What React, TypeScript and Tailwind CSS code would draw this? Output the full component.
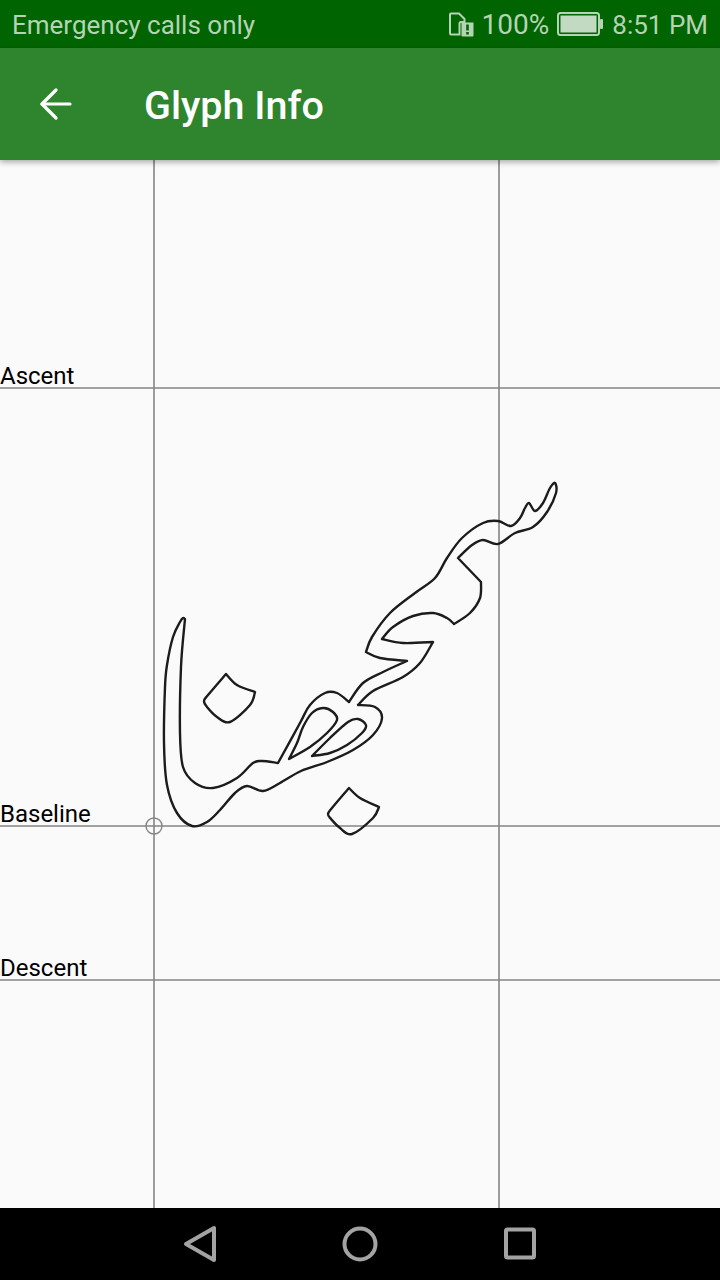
// App.tsx
import { ArrowLeft } from "lucide-react";

type Pt = [number, number];

// catmull-rom through the points, so an outline can be read off the picture
function smooth(pts: Pt[]) {
  let d = "";
  for (let i = 0; i < pts.length - 1; i++) {
    const p0 = pts[i - 1] || pts[i];
    const p1 = pts[i];
    const p2 = pts[i + 1];
    const p3 = pts[i + 2] || p2;
    const c1x = p1[0] + (p2[0] - p0[0]) / 6;
    const c1y = p1[1] + (p2[1] - p0[1]) / 6;
    const c2x = p2[0] - (p3[0] - p1[0]) / 6;
    const c2y = p2[1] - (p3[1] - p1[1]) / 6;
    d += `C${c1x.toFixed(1)} ${c1y.toFixed(1)} ${c2x.toFixed(1)} ${c2y.toFixed(1)} ${p2[0]} ${p2[1]}`;
  }
  return d;
}

// every run starts where the last one ended, joins between runs are corners
function outline(runs: Pt[][]) {
  return `M${runs[0][0][0]} ${runs[0][0][1]}` + runs.map(smooth).join("") + "Z";
}

const mainContour: Pt[][] = [
  [
    [185, 619], [183, 618], [180, 622], [173, 637], [167, 665], [165, 687], [164, 743], [167, 785], [177, 813], [192, 826],
    [207, 822], [220, 810], [235, 793], [247, 786], [263, 791], [280, 783], [301, 771], [327, 762],
    [353, 750], [373, 735], [382, 718], [375, 707], [358, 705],
  ],
  [[358, 705], [373, 691], [403, 677], [420, 663], [433, 642]],
  [[433, 642], [403, 643], [382, 639]],
  [[382, 639], [393, 627], [413, 616], [433, 613], [447, 618], [454, 624]],
  [[454, 624], [470, 613], [480, 598], [481, 582]],
  [[481, 582], [458, 558]],
  [
    [458, 558], [472, 545], [483, 540], [498, 544], [515, 533], [533, 527], [547, 512], [556, 493],
    [555, 483], [550, 488], [543, 503], [535, 511], [529, 503], [525, 508], [520, 518], [511, 526],
    [498, 521], [483, 523], [462, 538], [447, 558], [435, 578], [415, 593], [390, 613], [372, 637],
    [366, 652],
  ],
  [[366, 652], [380, 658], [407, 661]],
  [[407, 661], [383, 672], [363, 683], [349, 702]],
  [[349, 702], [337, 693], [325, 693], [310, 705], [300, 723], [278, 763]],
  [
    [278, 763], [262, 761], [253, 763], [237, 778], [213, 788], [195, 783], [183, 767], [180, 733],
    [181, 667], [185, 619],
  ],
];

const counterLeft: Pt[][] = [
  [
    [289, 759], [297, 743], [303, 727], [312, 713], [323, 708], [333, 712], [337, 720], [327, 733],
    [310, 747], [289, 759],
  ],
];
const counterRight: Pt[][] = [
  [
    [312, 756], [330, 738], [348, 722], [358, 719], [366, 725], [362, 733], [347, 745], [330, 753],
    [312, 756],
  ],
];
const dotUpper: Pt[][] = [
  [[226, 674], [237, 685], [255, 692]],
  [[255, 692], [250, 705], [230, 722], [217, 717], [207, 707], [204, 701], [208, 695], [226, 674]],
];
const dotLower: Pt[][] = [
  [[349, 788], [360, 798], [379, 807]],
  [[379, 807], [373, 818], [352, 834], [340, 828], [331, 819], [328, 814], [332, 808], [349, 788]],
];

const guides = [
  { label: "Ascent", top: "top-[202px]" },
  { label: "Baseline", top: "top-[640px]" },
  { label: "Descent", top: "top-[794px]" },
];

function GlyphCanvas() {
  return (
    <main className="relative flex-1 bg-[#fafafa]">
      <svg className="absolute inset-0" width="720" height="1048" viewBox="0 160 720 1048" fill="none">
        <g stroke="#858585" strokeWidth="1.6">
          <path d="M0 388H720M0 826H720M0 980H720M154 160V1208M499 160V1208" />
          <circle cx="154" cy="826" r="8" strokeWidth="1.4" />
        </g>
        <g stroke="#1c1c1c" strokeWidth="2.4" strokeLinejoin="round">
          <path d={outline(mainContour)} />
          <path d={outline(counterLeft)} />
          <path d={outline(counterRight)} />
          <path d={outline(dotUpper)} />
          <path d={outline(dotLower)} />
        </g>
      </svg>
      {guides.map((g) => (
        <span key={g.label} className={`absolute left-0 ${g.top} text-[24px] leading-7 text-black`}>
          {g.label}
        </span>
      ))}
    </main>
  );
}

function StatusBar() {
  return (
    <div className="flex h-12 items-center justify-between bg-[#006400] px-3 pt-[2px] text-[26px] leading-none text-[#b5d3b5]">
      <span>Emergency calls only</span>
      <div className="flex items-center">
        <svg width="25" height="25" viewBox="0 0 25 25" fill="none" className="mb-[2px] mr-2">
          <path
            d="M1 2.5a1 1 0 0 1 1-1h8l5.5 5.5v3H12a1.5 1.5 0 0 0-1.5 1.5v11H2a1 1 0 0 1-1-1z"
            stroke="#b5d3b5"
            strokeWidth="2"
          />
          <path d="M12.5 10.5h12v13a1 1 0 0 1-1 1h-10a1 1 0 0 1-1-1z" fill="#b5d3b5" />
          <path d="M17.2 12.5h2.6v6h-2.6zM17.2 20h2.6v2.6h-2.6z" fill="#006400" />
        </svg>
        <span className="text-[28px]">100%</span>
        <svg width="46" height="24" viewBox="0 0 46 24" fill="none" className="mb-[2px] ml-[8px] mr-[9px]">
          <rect x="1" y="1" width="41" height="22" rx="2.5" stroke="#b5d3b5" strokeWidth="2" />
          <rect x="3.5" y="3.5" width="36" height="17" fill="#c2dac2" />
          <rect x="43" y="7" width="3" height="10" rx="1" fill="#b5d3b5" />
        </svg>
        <span>8:51 PM</span>
      </div>
    </div>
  );
}

function NavBar() {
  return (
    <nav className="flex h-[72px] items-center justify-center gap-[108px] bg-black">
      <svg width="52" height="52" viewBox="0 0 52 52" fill="none" stroke="#a3a3a3" strokeWidth="4" strokeLinejoin="round">
        <path d="M40 10V42L12 26z" />
      </svg>
      <svg width="52" height="52" viewBox="0 0 52 52" fill="none" stroke="#a3a3a3" strokeWidth="4">
        <circle cx="26" cy="26" r="15.5" />
      </svg>
      <svg width="52" height="52" viewBox="0 0 52 52" fill="none" stroke="#a3a3a3" strokeWidth="4" strokeLinejoin="round">
        <rect x="12" y="11.5" width="28" height="28" rx="1.5" />
      </svg>
    </nav>
  );
}

export default function App() {
  return (
    <div className="flex h-[1280px] w-[720px] flex-col overflow-hidden font-['Roboto',sans-serif]">
      <StatusBar />
      <header className="relative z-10 flex h-[112px] items-center bg-[#2e852e] shadow-[0_2px_6px_rgba(0,0,0,0.35)]">
        <ArrowLeft size={48} strokeWidth={3.2} className="ml-[32px] text-white" absoluteStrokeWidth />
        <h1 className="ml-[64px] pt-[3px] text-[39.5px] font-medium leading-none text-white">Glyph Info</h1>
      </header>
      <GlyphCanvas />
      <NavBar />
    </div>
  );
}
